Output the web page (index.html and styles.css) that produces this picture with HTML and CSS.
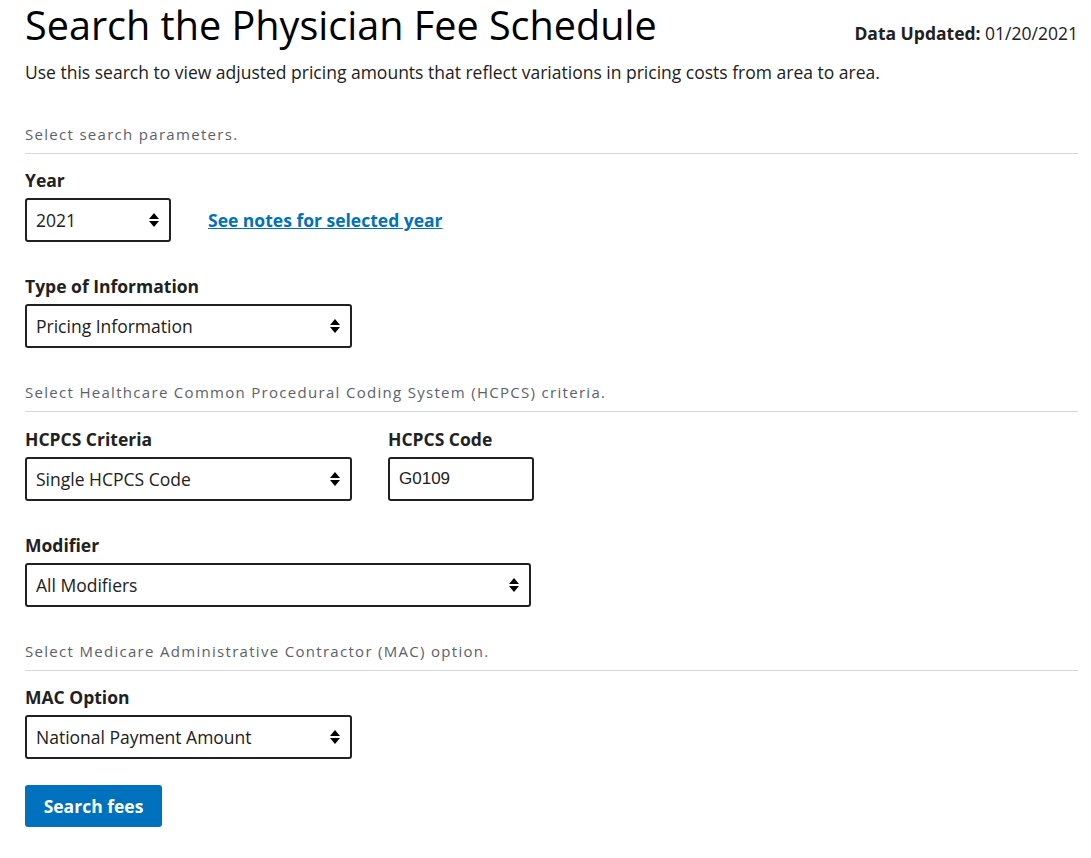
FILE: index.html
```html
<!DOCTYPE html>
<html lang="en">
  <head>
    <meta charset="UTF-8" />
    <meta name="viewport" content="width=device-width, initial-scale=1.0" />
    <title>Search the Physician Fee Schedule</title>
    <link rel="stylesheet" href="styles.css">
  </head>
  <body>
    <div class="page">
      <div class="page-header">
        <h1>Search the Physician Fee Schedule</h1>
        <p class="updated"><b>Data Updated:</b> 01/20/2021</p>
      </div>
      <p class="intro">Use this search to view adjusted pricing amounts that reflect variations in pricing costs from area to area.</p>

      <!-- search parameters -->
      <div class="section">
        <p class="section-title">Select search parameters.</p>
        <div class="field">
          <label for="year">Year</label>
          <div class="field-row">
            <div class="select-wrap small">
              <select id="year"><option>2021</option></select>
              <svg class="arrows" width="10" height="16" viewBox="0 0 10 16"><path d="M5 1 L10 7 H0 Z M0 9 H10 L5 15 Z" /></svg>
            </div>
            <a class="notes-link" href="#">See notes for selected year</a>
          </div>
        </div>
        <div class="field">
          <label for="infoType">Type of Information</label>
          <div class="select-wrap">
            <select id="infoType"><option>Pricing Information</option></select>
            <svg class="arrows" width="10" height="16" viewBox="0 0 10 16"><path d="M5 1 L10 7 H0 Z M0 9 H10 L5 15 Z" /></svg>
          </div>
        </div>
      </div>

      <!-- HCPCS criteria -->
      <div class="section">
        <p class="section-title">Select Healthcare Common Procedural Coding System (HCPCS) criteria.</p>
        <div class="field-group">
          <div class="field">
            <label for="criteria">HCPCS Criteria</label>
            <div class="select-wrap">
              <select id="criteria"><option>Single HCPCS Code</option></select>
              <svg class="arrows" width="10" height="16" viewBox="0 0 10 16"><path d="M5 1 L10 7 H0 Z M0 9 H10 L5 15 Z" /></svg>
            </div>
          </div>
          <div class="field">
            <label for="code">HCPCS Code</label>
            <input id="code" class="text-input" type="text" value="G0109" />
          </div>
        </div>
        <div class="field">
          <label for="modifier">Modifier</label>
          <div class="select-wrap wide">
            <select id="modifier"><option>All Modifiers</option></select>
            <svg class="arrows" width="10" height="16" viewBox="0 0 10 16"><path d="M5 1 L10 7 H0 Z M0 9 H10 L5 15 Z" /></svg>
          </div>
        </div>
      </div>

      <!-- MAC option -->
      <div class="section">
        <p class="section-title">Select Medicare Administrative Contractor (MAC) option.</p>
        <div class="field">
          <label for="mac">MAC Option</label>
          <div class="select-wrap">
            <select id="mac"><option>National Payment Amount</option></select>
            <svg class="arrows" width="10" height="16" viewBox="0 0 10 16"><path d="M5 1 L10 7 H0 Z M0 9 H10 L5 15 Z" /></svg>
          </div>
        </div>
      </div>

      <button class="search-btn">Search fees</button>
    </div>
  </body>
</html>
```

FILE: styles.css
```css
* {
  margin: 0;
  padding: 0;
  box-sizing: border-box;
}

body {
  font-family: "Open Sans", "Liberation Sans", sans-serif;
  color: #212121;
  background: #fff;
}

.page {
  padding: 0 13px 0 25px;
}

.page-header {
  display: flex;
  justify-content: space-between;
  align-items: baseline;
}

h1 {
  font-size: 39.6px;
  font-weight: 400;
  line-height: 50px;
  color: #000;
}

.updated {
  font-size: 17.5px;
  color: #212121;
}

.intro {
  font-size: 17.5px;
  line-height: 24px;
  margin-top: 10px;
}

.section {
  margin-top: 40px;
}

.section + .section {
  margin-top: 34px;
}

.section-title {
  font-size: 15px;
  letter-spacing: 1.3px;
  color: #5b616b;
  line-height: 20px;
  padding-bottom: 9px;
  border-bottom: 1px solid #d6d7d9;
}

.field {
  margin-top: 14px;
}

.field + .field {
  margin-top: 32px;
}

.field label {
  display: block;
  font-weight: 700;
  font-size: 17.5px;
  line-height: 24px;
  margin-bottom: 6px;
}

.field-row {
  display: flex;
  align-items: center;
  gap: 37px;
}

.field-group {
  display: flex;
  gap: 36px;
}

.field-group .field {
  margin-top: 15px;
}

.field-group + .field {
  margin-top: 32px;
}

.select-wrap {
  position: relative;
  width: 327px;
}

.select-wrap.small {
  width: 146px;
}

.select-wrap.wide {
  width: 506px;
}

.select-wrap select {
  appearance: none;
  -webkit-appearance: none;
  width: 100%;
  height: 44px;
  border: 2px solid #212121;
  border-radius: 3px;
  background: #fff;
  font-family: "Open Sans", sans-serif;
  font-size: 17.5px;
  color: #212121;
  padding: 0 30px 0 9px;
}

.arrows {
  position: absolute;
  right: 12px;
  top: 14px;
  fill: #000;
  pointer-events: none;
}

.text-input {
  width: 146px;
  height: 44px;
  border: 2px solid #212121;
  border-radius: 3px;
  font-family: "Liberation Sans", Arial, sans-serif;
  font-size: 17px;
  padding: 0 9px;
  color: #212121;
}

.notes-link {
  font-weight: 700;
  font-size: 17.5px;
  color: #0071bc;
  text-decoration: underline;
}

.search-btn {
  margin-top: 26px;
  background: #0071bc;
  color: #fff;
  border: none;
  border-radius: 3px;
  font-family: "Open Sans", sans-serif;
  font-weight: 700;
  font-size: 17.5px;
  width: 137px;
  height: 42px;
}
```
